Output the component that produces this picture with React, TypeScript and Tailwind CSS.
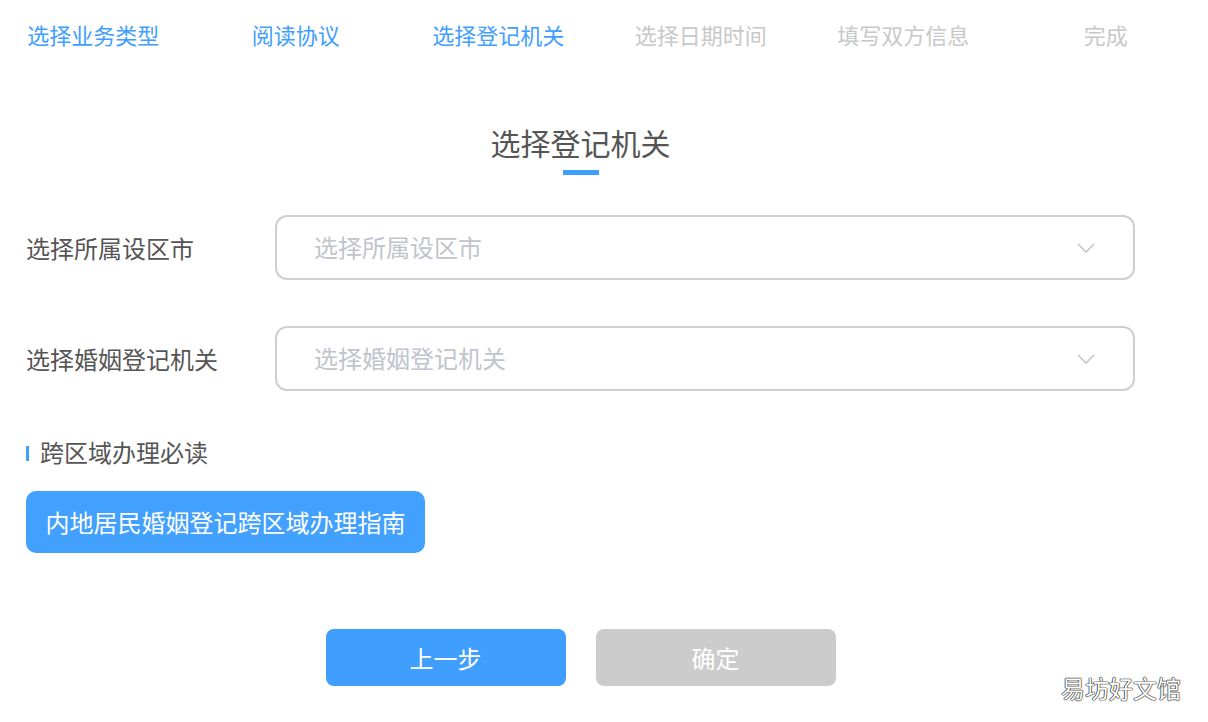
import React from "react";

const steps = [
  { t: "选择业务类型", active: true },
  { t: "阅读协议", active: true },
  { t: "选择登记机关", active: true },
  { t: "选择日期时间", active: false },
  { t: "填写双方信息", active: false },
  { t: "完成", active: false },
];

function Chevron() {
  return (
    <svg width="18" height="10" viewBox="0 0 18 10" fill="none">
      <path d="M1 1L9 9L17 1" stroke="#c0c4cc" strokeWidth="1.5" />
    </svg>
  );
}

function SelectRow({ label, placeholder }: { label: string; placeholder: string }) {
  return (
    <div className="flex items-center">
      <div className="w-[249px] shrink-0 text-[24px] leading-[32px] text-[#555]">{label}</div>
      <div className="flex h-[65px] flex-1 items-center justify-between rounded-[12px] border-2 border-[#cfcfcf] pl-[37px] pr-[38px]">
        <span className="-mt-[2px] text-[24px] leading-[32px] text-[#c0c4cc]">{placeholder}</span>
        <Chevron />
      </div>
    </div>
  );
}

export default function App() {
  return (
    <div
      className="relative h-[722px] w-[1208px] overflow-hidden bg-white"
      style={{ fontFamily: '"Noto Sans CJK SC", "Noto Sans", sans-serif' }}
    >
      <div className="-ml-[8px] grid h-[68px] w-[1215px] grid-cols-6 items-center">
        {steps.map((s) => (
          <div
            key={s.t}
            className={
              "text-center text-[22px] leading-[30px] " + (s.active ? "text-[#409eff]" : "text-[#c8c8c8]")
            }
          >
            {s.t}
          </div>
        ))}
      </div>

      <div className="w-[1161px] px-[26px]">
        <div className="flex flex-col items-center pt-[54px]">
          <div className="text-[30px] leading-[40px] text-[#555]">选择登记机关</div>
          <div className="mt-[8px] h-[5px] w-[36px] bg-[#409eff]" />
        </div>

        <div className="mt-[40px] flex flex-col gap-[46px]">
          <SelectRow label="选择所属设区市" placeholder="选择所属设区市" />
          <SelectRow label="选择婚姻登记机关" placeholder="选择婚姻登记机关" />
        </div>

        <div className="mt-[47px] flex items-center">
          <div className="h-[15px] w-[3px] bg-[#409eff]" />
          <div className="-mt-[2px] ml-[11px] text-[24px] leading-[32px] text-[#555]">跨区域办理必读</div>
        </div>

        <div className="mt-[23px] flex h-[62px] w-[399px] items-center justify-center rounded-[10px] bg-[#42a0ff] text-[24px] text-white">
          内地居民婚姻登记跨区域办理指南
        </div>

        <div className="mt-[76px] flex justify-center gap-[30px]">
          <div className="flex h-[57px] w-[240px] items-center justify-center rounded-[8px] bg-[#409eff] text-[24px] text-white">
            上一步
          </div>
          <div className="flex h-[57px] w-[240px] items-center justify-center rounded-[8px] bg-[#cccccc] text-[24px] text-white">
            确定
          </div>
        </div>
      </div>

      <div
        className="absolute left-[1061px] top-[673px] text-[24px] leading-[30px] text-white"
        style={{ textShadow: "0 0 1px #222, 0 0 1px #222, 0 0 1px #222, 0 0 1px #222" }}
      >
        易坊好文馆
      </div>
    </div>
  );
}
